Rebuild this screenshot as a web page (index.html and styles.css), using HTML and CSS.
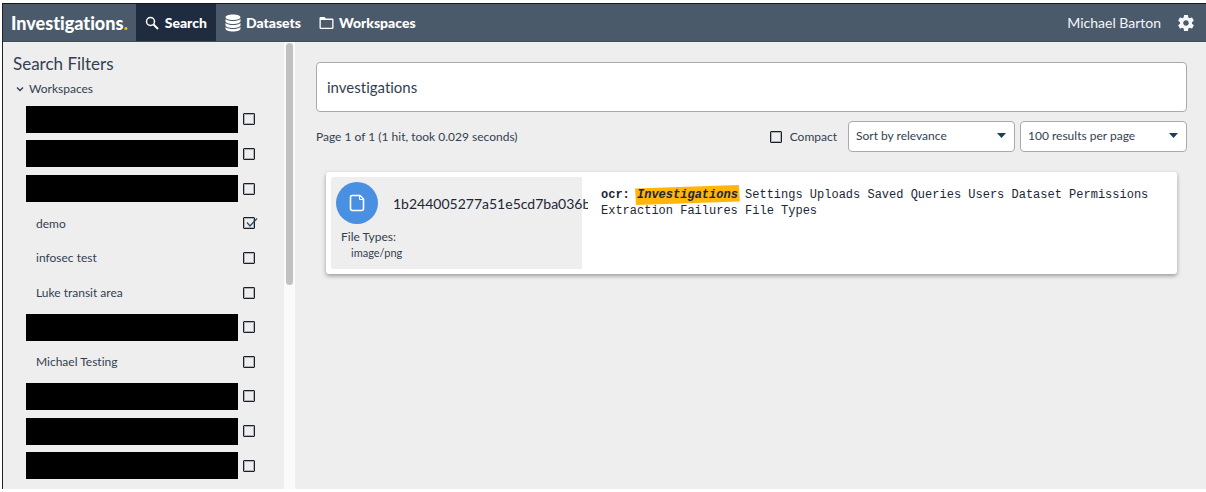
FILE: index.html
```html
<!DOCTYPE html>
<html lang="en">
<head>
<meta charset="utf-8">
<title>Investigations</title>
<link rel="stylesheet" href="styles.css">
</head>
<body>
<div class="app">
  <header class="header">
    <a class="brand" href="#">Investigations<span class="brand-dot">.</span></a>
    <nav class="nav">
      <a class="nav-item nav-item-active" href="#">
        <svg width="15" height="16" viewBox="0 0 15 16" fill="none" stroke="currentColor"><circle cx="5.500" cy="6.500" r="4" stroke-width="1.500"/><path d="M8.500 9.500L13 14" stroke-width="2"/></svg>
        Search</a>
      <a class="nav-item" href="#">
        <svg width="16" height="18" viewBox="0 0 16 18"><path fill="currentColor" d="M8 0.5C3.6 .5.5 1.700.5 3.300S3.600 6 8 6s7.500-1.100 7.500-2.700S12.400.5 8 .5zM.5 5v2.300C.5 8.900 3.600 10 8 10s7.500-1.100 7.500-2.700V5C14 6.400 11 7 8 7S2 6.400.5 5zM.5 9v2.300C.5 12.900 3.600 14 8 14s7.500-1.100 7.500-2.700V9C14 10.400 11 11 8 11S2 10.400.5 9zM.5 13v1.800C.5 16.400 3.600 17.500 8 17.500s7.500-1.100 7.500-2.700V13C14 14.400 11 15 8 15s-6-.6-7.500-2z"/></svg>
        Datasets</a>
      <a class="nav-item" href="#">
        <svg width="15" height="14" viewBox="0 0 15 14"><path fill="currentColor" fill-rule="evenodd" d="M1.500 1H5.500L7 2.500H13.200Q14.500 2.500 14.500 3.800V11.700Q14.500 13 13.200 13H1.800Q.5 13 .5 11.700V2.200Q.5 1 1.500 1zM1.800 4V11.700H13.200V4z"/></svg>
        Workspaces</a>
    </nav>
    <div class="account">
      <span>Michael Barton</span>
      <button class="icon-button" aria-label="Settings">
        <svg width="16" height="16" viewBox="2 2 20 20"><path fill="currentColor" d="M19.430 12.980c.04-.32.07-.64.07-.98s-.03-.66-.07-.98l2.110-1.650c.19-.15.240-.42.120-.64l-2-3.460c-.12-.22-.39-.3-.61-.22l-2.490 1c-.52-.4-1.080-.73-1.690-.98l-.38-2.650C14.460 2.180 14.250 2 14 2h-4c-.25 0-.46.18-.49.42l-.38 2.650c-.61.250-1.170.59-1.690.98l-2.490-1c-.23-.09-.49 0-.61.22l-2 3.460c-.13.22-.07.49.12.64l2.110 1.650c-.04.32-.07.65-.07.98s.03.66.07.98l-2.110 1.650c-.19.150-.24.42-.12.64l2 3.460c.12.22.39.3.61.22l2.490-1c.52.4 1.080.73 1.690.98l.38 2.650c.03.24.24.42.49.42h4c.25 0 .46-.18.49-.42l.38-2.650c.61-.25 1.170-.59 1.690-.98l2.490 1c.23.09.49 0 .61-.22l2-3.460c.12-.22.07-.49-.12-.64l-2.110-1.650zM12 15.500c-1.930 0-3.500-1.570-3.500-3.500s1.570-3.500 3.500-3.500 3.500 1.570 3.500 3.500-1.570 3.500-3.500 3.500z"/></svg>
      </button>
    </div>
  </header>
  <div class="body">
    <aside class="sidebar">
      <div class="filters">
        <h1 class="filters-title">Search Filters</h1>
        <button class="group-toggle">
          <svg width="8" height="8" viewBox="0 0 8 8" fill="none" stroke="currentColor" stroke-width="1.400"><path d="M1 2.500L4 5.500L7 2.500"/></svg>
          Workspaces</button>
        <ul class="workspaces">
          <li class="workspace"><span class="redacted"></span><span class="check"><input type="checkbox" aria-label="Workspace 1"></span></li>
          <li class="workspace"><span class="redacted"></span><span class="check"><input type="checkbox" aria-label="Workspace 2"></span></li>
          <li class="workspace"><span class="redacted"></span><span class="check"><input type="checkbox" aria-label="Workspace 3"></span></li>
          <li class="workspace"><label class="workspace-name" for="w4">demo</label><span class="check"><input id="w4" type="checkbox" checked><svg class="tick" width="14" height="12" viewBox="0 0 14 12" fill="none" stroke="currentColor" stroke-width="1.300"><path d="M3 5.500L6 9L13 1.500"/></svg></span></li>
          <li class="workspace"><label class="workspace-name" for="w5">infosec test</label><span class="check"><input id="w5" type="checkbox"></span></li>
          <li class="workspace"><label class="workspace-name" for="w6">Luke transit area</label><span class="check"><input id="w6" type="checkbox"></span></li>
          <li class="workspace"><span class="redacted"></span><span class="check"><input type="checkbox" aria-label="Workspace 7"></span></li>
          <li class="workspace"><label class="workspace-name" for="w8">Michael Testing</label><span class="check"><input id="w8" type="checkbox"></span></li>
          <li class="workspace"><span class="redacted"></span><span class="check"><input type="checkbox" aria-label="Workspace 9"></span></li>
          <li class="workspace"><span class="redacted"></span><span class="check"><input type="checkbox" aria-label="Workspace 10"></span></li>
          <li class="workspace"><span class="redacted"></span><span class="check"><input type="checkbox" aria-label="Workspace 11"></span></li>
        </ul>
      </div>
      <div class="scrollbar"><div class="scrollbar-thumb"></div></div>
    </aside>
    <main class="main">
      <input class="search" type="text" value="investigations" aria-label="Search">
      <div class="toolbar">
        <p class="summary">Page 1 of 1 (1 hit, took 0.029 seconds)</p>
        <label class="compact"><input type="checkbox">Compact</label>
        <div class="select-box">
          <select class="select" aria-label="Sort order"><option>Sort by relevance</option></select>
          <svg class="caret" width="9" height="5" viewBox="0 0 9 5"><path fill="currentColor" d="M0 0H9L4.500 5z"/></svg>
        </div>
        <div class="select-box">
          <select class="select" aria-label="Page size"><option>100 results per page</option></select>
          <svg class="caret" width="9" height="5" viewBox="0 0 9 5"><path fill="currentColor" d="M0 0H9L4.500 5z"/></svg>
        </div>
      </div>
      <article class="result">
        <div class="result-info">
          <div class="result-head">
            <span class="file-badge"><svg width="16" height="18" viewBox="0 0 16 18" fill="none" stroke="currentColor" stroke-width="1.600" stroke-linejoin="round"><path d="M3 1.500H11L14.500 5V14.500Q14.500 16.500 12.500 16.500H3.500Q1.500 16.500 1.500 14.500V3Q1.500 1.500 3 1.500z"/><path d="M10.500 1.500V5.500H14.500" stroke-width="1"/></svg></span>
            <a class="result-title" href="#">1b244005277a51e5cd7ba036b</a>
          </div>
          <div class="file-types">File Types:</div>
          <div class="file-type">image/png</div>
        </div>
        <p class="excerpt"><b>ocr:</b> <mark class="hit">Investigations</mark> Settings Uploads Saved Queries Users Dataset Permissions Extraction Failures File Types</p>
      </article>
    </main>
  </div>
</div>
</body>
</html>
```
FILE: styles.css
```css
* { box-sizing: border-box; }
body {
  margin: 0;
  padding: 3px 0 3px 2px;
  min-height: 100vh;
  display: flex;
  background: #fff;
  color: #333f50;
  font-family: Lato, "Open Sans", sans-serif;
  font-size: 12px;
  font-variant-ligatures: none;
}
a { color: inherit; text-decoration: none; }
button, input, select { font: inherit; color: inherit; }
svg { display: block; flex: none; }

.app {
  flex: 1;
  min-width: 0;
  display: flex;
  flex-direction: column;
  background: #eee;
  border-top: 1px solid #111820;
  border-left: 1px solid #222;
}

.header {
  height: 38px;
  display: flex;
  background: #4a5a6b;
  border-bottom: 1px solid #3f4e60;
  color: #fff;
}
.brand {
  padding: 0 8px;
  display: flex;
  align-items: center;
  font-size: 18px;
  font-weight: 900;
}
.brand-dot { color: #ffb50a; }
.nav { display: flex; }
.nav-item {
  padding: 0 9px;
  display: flex;
  align-items: center;
  gap: 5px;
  font-size: 14px;
  font-weight: 900;
}
.nav-item-active { background: #1f2c3f; }
.account {
  margin-left: auto;
  padding-right: 12px;
  display: flex;
  align-items: center;
  gap: 17px;
  font-size: 14px;
  color: #f4f6f8;
}
.icon-button {
  padding: 0;
  border: 0;
  background: none;
}

.body { flex: 1; display: flex; }

.sidebar { flex: none; width: 292px; display: flex; }
.filters {
  flex: 1;
  padding: 10px 0 6px 10px;
  display: flex;
  flex-direction: column;
}
.filters-title {
  margin: 0;
  font-size: 17px;
  line-height: 24px;
  font-weight: 400;
}
.group-toggle {
  align-self: flex-start;
  margin: 4px 0;
  padding: 0 3px;
  border: 0;
  background: none;
  display: flex;
  align-items: center;
  gap: 5px;
  line-height: 18px;
}
.workspaces {
  flex: 1;
  margin: 0;
  padding: 0 29px 0 13px;
  list-style: none;
  display: flex;
  flex-direction: column;
}
.workspace {
  flex: 1;
  display: flex;
  align-items: center;
  gap: 5px;
}
.redacted { flex: 1; height: 27px; background: #000; }
.workspace-name { flex: 1; padding-left: 10px; }
.check { position: relative; }
input[type="checkbox"] {
  appearance: none;
  display: block;
  width: 12px;
  height: 12px;
  margin: 0;
  border: 1px solid #1a202b;
  border-radius: 1px;
  box-shadow: inset 0 0 0 1px rgba(26, 32, 43, 0.3);
}
.tick { position: absolute; top: 0; left: 1px; color: #2b4b63; }
.scrollbar { width: 11px; padding: 1px 2px; background: #fafafa; }
.scrollbar-thumb { height: 242px; border-radius: 4px; background: #c1c1c1; }

.main { flex: 1; min-width: 0; padding: 20px 19px 20px 21px; }
.search {
  display: block;
  width: 100%;
  height: 50px;
  padding: 0 10px;
  border: 1px solid #aaa;
  border-radius: 4px;
  background: #fff;
  font-size: 15px;
}
.toolbar {
  margin-top: 9px;
  display: flex;
  align-items: center;
  gap: 5px;
}
.summary { flex: 1; margin: 0; }
.compact {
  margin-right: 6px;
  display: flex;
  align-items: center;
  gap: 8px;
}
.select-box { position: relative; width: 167px; }
.select {
  appearance: none;
  display: block;
  width: 100%;
  height: 31px;
  padding: 0 7px 2px;
  border: 1px solid #aaa;
  border-radius: 4px;
  background: #fff;
}
.caret { position: absolute; right: 9px; top: 12px; color: #17405e; pointer-events: none; }

.result {
  margin: 20px 10px 0;
  padding: 5px;
  display: flex;
  gap: 19px;
  border-radius: 3px;
  background: #fff;
  box-shadow: 0 2px 4px rgba(0, 0, 0, 0.35);
}
.result-info {
  flex: none;
  width: 251px;
  padding: 5px 0 9px 5px;
  background: #eee;
  border-radius: 3px 0 0 3px;
}
.result-head { display: flex; align-items: center; gap: 15px; }
.file-badge {
  flex: none;
  width: 42px;
  height: 42px;
  border-radius: 50%;
  display: grid;
  place-items: center;
  background: #4a90e2;
  color: #fff;
}
.result-title {
  width: 195px;
  overflow: hidden;
  white-space: nowrap;
  font-size: 14px;
  color: #1c2636;
  flex: none;
}
.file-types { margin-top: 4px; padding-left: 5px; line-height: 18px; }
.file-type { padding-left: 15px; font-size: 11px; line-height: 14px; }
.excerpt {
  margin: 0;
  padding-top: 10px;
  font-family: "Liberation Mono", monospace;
  font-size: 12px;
  line-height: 16px;
  color: #1c2636;
}
.hit {
  position: relative;
  isolation: isolate;
  background: none;
  color: #1c2636;
  font-weight: 700;
  font-style: italic;
}
.hit::before {
  content: "";
  position: absolute;
  inset: -3px -2px;
  z-index: -1;
  background: #ffb50a;
  clip-path: polygon(0 18%, 99% 0, 100% 82%, 1% 100%);
}
```
